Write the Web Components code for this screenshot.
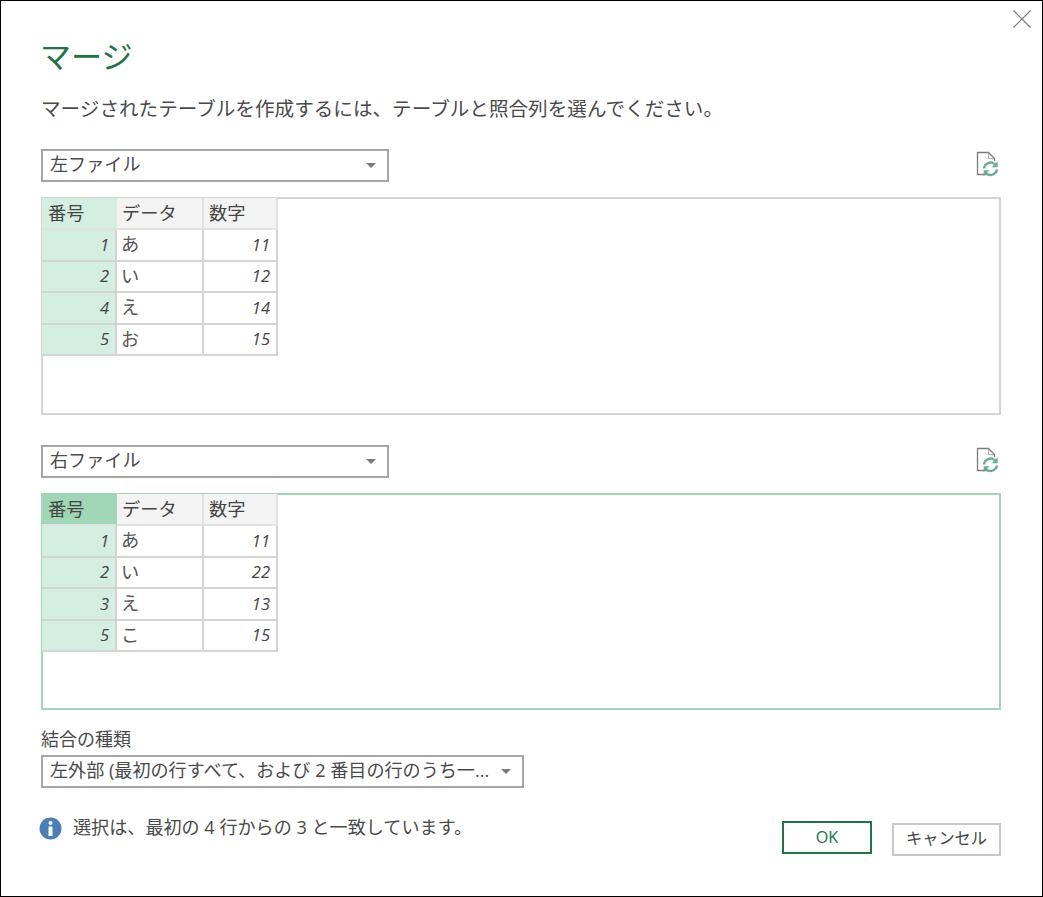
<!DOCTYPE html>
<html lang="ja">
<head>
<meta charset="utf-8">
<title>マージ</title>
<style>
  html, body { margin: 0; padding: 0; background: #fff; }
  body { font-family: "Open Sans", "Noto Sans CJK JP", sans-serif; color: #444; }
</style>
</head>
<body>
<merge-dialog>
  <span slot="title">マージ</span>
  <span slot="description">マージされたテーブルを作成するには、テーブルと照合列を選んでください。</span>

  <table-picker label="左ファイル" rows='[["1","あ","11"],["2","い","12"],["4","え","14"],["5","お","15"]]'></table-picker>
  <table-picker class="second" label="右ファイル" selected rows='[["1","あ","11"],["2","い","22"],["3","え","13"],["5","こ","15"]]'></table-picker>

  <span slot="join-label">結合の種類</span>
  <combo-box slot="join" style="width:483px">左外部 (最初の行すべて、および 2 番目の行のうち一...</combo-box>

  <info-note slot="note">選択は、最初の 4 行からの 3 と一致しています。</info-note>
  <dialog-button slot="buttons" primary>OK</dialog-button>
  <dialog-button slot="buttons">キャンセル</dialog-button>
</merge-dialog>

<script>
(function () {
  const FONT = '"Open Sans", "Noto Sans CJK JP", sans-serif';

  customElements.define(
    "combo-box",
    class ComboBox extends HTMLElement {
      constructor() {
        super();
        this.attachShadow({ mode: "open" }).innerHTML = `
          <style>
            :host {
              display: flex;
              align-items: center;
              box-sizing: border-box;
              height: 33px;
              border: 2px solid #a6a6a6;
              padding: 0 11px 0 7px;
              font: 18.1px/1 ${FONT};
              color: #4a4a4a;
              background: #fff;
            }
            .text { flex: 1; white-space: nowrap; overflow: hidden; padding-bottom: 2px; }
            .arrow {
              width: 0;
              height: 0;
              border-left: 5px solid transparent;
              border-right: 5px solid transparent;
              border-top: 5px solid #7a7a7a;
              margin-top: -1px;
            }
          </style>
          <span class="text"><slot></slot></span>
          <span class="arrow"></span>`;
      }
    }
  );

  customElements.define(
    "preview-table",
    class PreviewTable extends HTMLElement {
      constructor() {
        super();
        this.attachShadow({ mode: "open" });
      }

      connectedCallback() {
        const selected = this.hasAttribute("selected");
        const rows = JSON.parse(this.getAttribute("rows") || "[]");
        const body = rows
          .map(
            (r) => `
              <div class="cell key num">${r[0]}</div>
              <div class="cell val">${r[1]}</div>
              <div class="cell num">${r[2]}</div>`
          )
          .join("");
        this.shadowRoot.innerHTML = `
          <style>
            :host {
              display: block;
              box-sizing: border-box;
              height: 100%;
              border: 2px solid ${selected ? "#a0d5b5" : "#d4d4d4"};
              background: #fff;
              font: 18.2px/1 ${FONT};
              color: #444;
            }
            .grid {
              display: grid;
              grid-template-columns: 75px 87px 74px;
              grid-template-rows: 32px repeat(4, 31.5px);
              width: 236px;
              margin: -1px 0 0 -1px;
            }
            .cell {
              display: flex;
              align-items: center;
              box-sizing: border-box;
              padding: 0 6px;
              border-right: 2px solid #d4d4d4;
              border-bottom: 2px solid #d4d4d4;
              overflow: hidden;
            }
            .head {
              background: #f3f3f3;
              border-color: #e1e1e1;
              padding-left: 5px;
            }
            .head.key {
              background: ${selected ? "#a0d5b5" : "#d4efe1"};
              border-right-color: transparent;
              padding-left: 6px;
            }
            .key { background: #d4efe1; }
            .val { color: #555; padding: 0 4px 1px; }
            .num {
              justify-content: flex-end;
              font-size: 16.5px;
              font-style: italic;
              font-family: "Open Sans", sans-serif;
            }
          </style>
          <div class="grid">
            <div class="cell head key">番号</div>
            <div class="cell head">データ</div>
            <div class="cell head">数字</div>
            ${body}
          </div>`;
      }
    }
  );

  customElements.define(
    "refresh-icon",
    class RefreshIcon extends HTMLElement {
      constructor() {
        super();
        this.attachShadow({ mode: "open" }).innerHTML = `
          <style>
            :host { display: block; width: 26px; height: 26px; margin-top: -3px; }
            svg { display: block; }
          </style>
          <svg width="26" height="26" viewBox="0 0 26 26" fill="none">
            <path d="M11.5 23.5H2.5V1.5H13.5L19.5 7.5V10" stroke="#7a7a7a" stroke-width="1.3"/>
            <path d="M13.5 1.5V7.5H19.5" stroke="#a8a8a8" stroke-width="1"/>
            <path d="M9 17.5a6.6 6.6 0 0 1 11-4.2" stroke="#6fab94" stroke-width="2.4"/>
            <path d="M22.6 10.2v6h-6z" fill="#6fab94"/>
            <path d="M22 18.5a6.6 6.6 0 0 1-11 3.6" stroke="#6fab94" stroke-width="2.4"/>
            <path d="M8.6 25.2v-6h6z" fill="#6fab94"/>
          </svg>`;
      }
    }
  );

  customElements.define(
    "table-picker",
    class TablePicker extends HTMLElement {
      constructor() {
        super();
        this.attachShadow({ mode: "open" });
      }

      connectedCallback() {
        const rows = this.getAttribute("rows");
        const selected = this.hasAttribute("selected") ? "selected" : "";
        this.shadowRoot.innerHTML = `
          <style>
            :host { display: block; }
            .top {
              display: flex;
              justify-content: space-between;
              align-items: center;
              height: 33px;
              margin-bottom: 15px;
            }
            combo-box { width: 348px; }
            .box { height: 218px; }
            :host([selected]) .box { height: 217px; }
          </style>
          <div class="top">
            <combo-box>${this.getAttribute("label")}</combo-box>
            <refresh-icon></refresh-icon>
          </div>
          <div class="box">
            <preview-table ${selected} rows='${rows}'></preview-table>
          </div>`;
      }
    }
  );

  customElements.define(
    "info-note",
    class InfoNote extends HTMLElement {
      constructor() {
        super();
        this.attachShadow({ mode: "open" }).innerHTML = `
          <style>
            :host {
              display: flex;
              align-items: center;
              gap: 11px;
              font: 18.1px/1 ${FONT};
              color: #4a4a4a;
            }
            svg { display: block; flex: none; }
            span { padding-bottom: 2px; }
          </style>
          <svg width="23" height="23" viewBox="0 0 23 23">
            <circle cx="11.5" cy="11.5" r="11" fill="#4a7eb5"/>
            <circle cx="11.5" cy="6" r="2" fill="#fff"/>
            <rect x="9.5" y="9.5" width="4" height="9.5" fill="#fff"/>
          </svg>
          <span><slot></slot></span>`;
      }
    }
  );

  customElements.define(
    "dialog-button",
    class DialogButton extends HTMLElement {
      constructor() {
        super();
        this.attachShadow({ mode: "open" }).innerHTML = `
          <style>
            :host {
              display: flex;
              align-items: center;
              justify-content: center;
              box-sizing: border-box;
              height: 33px;
              width: 109px;
              border: 2px solid #c8c8c8;
              padding-bottom: 3px;
              font: 16.2px/1 ${FONT};
              color: #444;
              background: #fff;
            }
            :host([primary]) {
              width: 90px;
              border-color: #217346;
              color: #217346;
              margin-top: -2px;
              padding-bottom: 0;
            }
          </style>
          <slot></slot>`;
      }
    }
  );

  customElements.define(
    "merge-dialog",
    class MergeDialog extends HTMLElement {
      constructor() {
        super();
        this.attachShadow({ mode: "open" }).innerHTML = `
          <style>
            :host {
              display: block;
              position: relative;
              box-sizing: border-box;
              width: 1043px;
              height: 897px;
              border: 1px solid #000;
              padding: 31px 41px 0 40px;
              background: #fff;
              overflow: hidden;
            }
            .close {
              position: absolute;
              top: 9px;
              right: 11px;
              display: block;
            }
            .title {
              height: 46px;
              font: 31px/48px ${FONT};
              margin-left: -1px;
              color: #217346;
            }
            .description {
              height: 30px;
              margin-top: 16px;
              font: 19.6px/30px ${FONT};
              white-space: nowrap;
              color: #4a4a4a;
            }
            .pickers {
              display: flex;
              flex-direction: column;
              gap: 30px;
              margin-top: 25px;
            }
            .join-label {
              margin-top: 16px;
              height: 29px;
              font: 18px/26px ${FONT};
              color: #4a4a4a;
            }
            .footer {
              display: flex;
              justify-content: space-between;
              align-items: flex-start;
              margin-top: 33px;
            }
            .note { margin-left: -2px; margin-top: -4px; }
            .buttons { display: flex; gap: 20px; margin-top: 2px; }
          </style>
          <svg class="close" width="18" height="18" viewBox="0 0 18 18">
            <path d="M.5 .5L17.5 17.5M17.5 .5L.5 17.5" stroke="#777" stroke-width="1.1" fill="none"/>
          </svg>
          <div class="title"><slot name="title"></slot></div>
          <div class="description"><slot name="description"></slot></div>
          <div class="pickers"><slot></slot></div>
          <div class="join-label"><slot name="join-label"></slot></div>
          <slot name="join"></slot>
          <div class="footer">
            <div class="note"><slot name="note"></slot></div>
            <div class="buttons"><slot name="buttons"></slot></div>
          </div>`;
      }
    }
  );
})();
</script>
</body>
</html>
